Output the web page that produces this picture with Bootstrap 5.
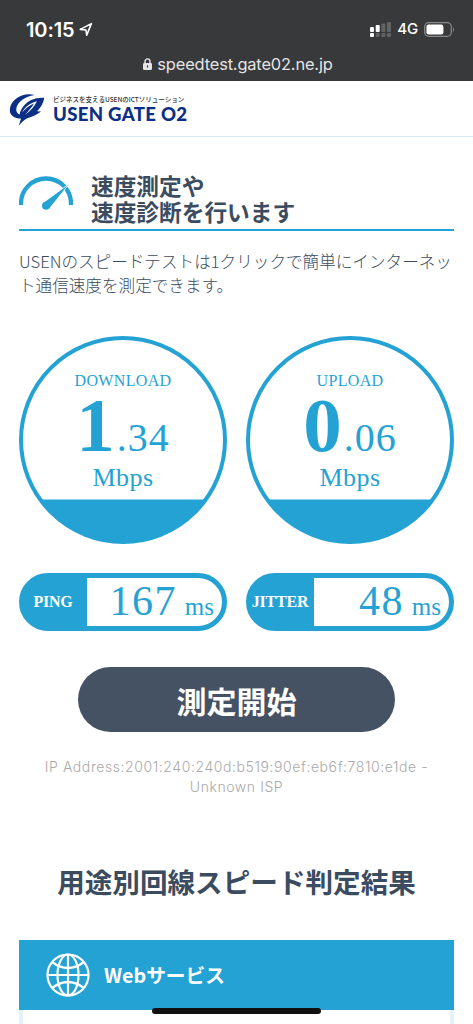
<!DOCTYPE html>
<html lang="ja">
<head>
<meta charset="utf-8">
<meta name="viewport" content="width=device-width, initial-scale=1">
<title>USEN GATE 02</title>
<link href="https://cdn.jsdelivr.net/npm/bootstrap@5.3.0/dist/css/bootstrap.min.css" rel="stylesheet">
<script src="https://cdn.jsdelivr.net/npm/bootstrap@5.3.0/dist/js/bootstrap.bundle.min.js" defer></script>
<style>
:root { --sky: #25a2d4; --navy: #3c4c60; }
body { font-family: "Noto Sans CJK JP", sans-serif; color: var(--navy); height: 1024px; overflow: hidden; background: #fff; }
svg { display: block; flex: none; }
.phone-bar { height: 81px; background: #38393b; color: #fff; font-family: Inter, sans-serif; }
.clock { height: 57px; padding: 2px 18px 0 26px; }
.clock-time { font-size: 20px; font-weight: 600; letter-spacing: -.1px; }
.net { font-size: 15px; font-weight: 500; letter-spacing: -.2px; margin: 0 6px; }
.url { height: 14px; font-size: 16.4px; letter-spacing: -.15px; color: #e4e4e5; line-height: 14px; padding-left: 2px; }
.brand-bar { height: 56px; border-bottom: 1px solid #d7e9f5; padding: 12px 9px; }
.brand-text { margin-left: 7px; padding-top: 2px; }
.brand-sub { font-size: 6.55px; line-height: 9px; font-weight: 500; letter-spacing: -.03px; color: #333; }
.brand-name { font-family: Lato, sans-serif; font-weight: 900; font-size: 18.6px; line-height: 20px; color: #0c2f86; letter-spacing: .3px; }
.page { padding: 36px 19px 0; }
.page-title { height: 58px; border-bottom: 2px solid var(--sky); }
.page-title h1 { font-size: 22.7px; line-height: 26px; font-weight: 700; margin: 0 0 0 18px; white-space: nowrap; }
.intro { font-size: 16.6px; line-height: 24px; font-weight: 300; margin: 18px 0 0; height: 87px; white-space: nowrap; }
.meters { gap: 19px; font-family: "Liberation Serif", serif; color: var(--sky); }
.dial { width: 208px; height: 208px; border: 4.5px solid var(--sky); border-radius: 50%; background: linear-gradient(#fff 159px, var(--sky) 160px); padding-top: 33px; white-space: nowrap; }
.dial-label { font-size: 16px; line-height: 16px; letter-spacing: .35px; }
.dial-value { height: 76px; line-height: 73px; }
.whole { font-size: 77px; font-weight: 700; letter-spacing: 2px; }
.frac { font-size: 40px; letter-spacing: 1px; }
.dial-unit { font-size: 26px; line-height: 26px; letter-spacing: .4px; }
.pill { width: 208px; height: 58px; border: 5px solid var(--sky); border-radius: 29px; background: linear-gradient(90deg, var(--sky) 63px, #fff 63px) border-box; background-origin: padding-box; margin-top: 10px; }
.pill-label { width: 63px; color: #fff; font-size: 16px; font-weight: 700; letter-spacing: -.2px; padding: 0 5px 1px 0; }
.pill-value { font-size: 42px; line-height: 46px; letter-spacing: 1.4px; padding-right: 8px; }
.pill-value span { font-size: 25px; letter-spacing: 0; margin-left: 8px; }
.start { width: 317px; height: 65px; border-radius: 33px; background: #455264; color: #fff; font-size: 30px; font-weight: 700; line-height: 1; margin-top: 36px; padding: 0; }
.start:hover { background: #364355; color: #fff; }
.address { font-family: Inter, sans-serif; font-size: 14px; line-height: 20px; font-weight: 300; color: #aaa; margin-top: 25px; height: 40px; letter-spacing: .58px; white-space: nowrap; }
.results { font-size: 27.6px; line-height: 34px; font-weight: 700; margin: 67px 0 42px; white-space: nowrap; }
.service-head { height: 70px; background: var(--sky); color: #fff; padding-left: 27px; font-size: 19.7px; font-weight: 700; gap: 14px; }
.service-body { height: 14px; border: 4px solid #e5f1f9; border-width: 0 4px; }
.home-line { position: absolute; left: 152px; top: 1008px; width: 169px; height: 6px; border-radius: 3px; background: #111; }
</style>
</head>
<body>
<header class="phone-bar">
  <div class="clock d-flex align-items-center">
    <span class="clock-time">10:15</span>
    <svg class="ms-1" width="14" height="15" viewBox="0 0 14 15" fill="none" stroke="#fff" stroke-width="1.6" stroke-linejoin="round"><path d="M1.2 7.4 12.4 1.6 7.7 13.2 7 8z"/></svg>
    <svg class="ms-auto" width="21" height="15" viewBox="0 0 21 15" fill="#fff"><rect y="5" width="4" height="5" rx="1"/><rect x="5.7" y="3" width="4" height="7" rx="1"/><rect y="11" width="4" height="4" rx="1"/><g fill="#626365"><rect x="11.4" y="1.5" width="4" height="8.5" rx="1"/><rect x="17" width="4" height="10" rx="1"/><rect x="5.7" y="11" width="4" height="4" rx="1"/><rect x="11.4" y="11" width="4" height="4" rx="1"/><rect x="17" y="11" width="4" height="4" rx="1"/></g></svg>
    <span class="net">4G</span>
    <svg width="31" height="15" viewBox="0 0 31 15"><rect x=".7" y=".7" width="26.6" height="13.6" rx="4" fill="none" stroke="#888" stroke-width="1.3"/><rect x="2.4" y="2.4" width="17" height="10.2" rx="2.3" fill="#fff"/><path d="M29 5q2 2.5 0 5z" fill="#888"/></svg>
  </div>
  <div class="url d-flex justify-content-center align-items-center">
    <svg class="me-1" width="11" height="13" viewBox="0 0 11 13"><rect x="1" y="5" width="9" height="7" rx="1.2" fill="#e4e4e5"/><path d="M3 5.5V3.4a2.5 2.5 0 0 1 5 0v2.1" fill="none" stroke="#e4e4e5" stroke-width="1.4"/><path d="M5.5 7.4v2" stroke="#38393b" stroke-width="1.3"/></svg>
    <span>speedtest.gate02.ne.jp</span>
  </div>
</header>
<nav class="brand-bar d-flex">
  <svg width="37" height="33" viewBox="0 0 37 33" fill="#0c2f86"><path d="M25.500 2C14-1.500 .8 7 .8 17c0 5.500 4.500 8.500 11.200 8.600l-2.200 7C13 29 15.500 26.500 19 25c5-1.500 9.500-3.500 13-6.500l-4-.3C32 14.500 34.500 10 35.300 4.800 27 4 20 7 15.500 12c-3 3.500-4.500 6.500-5 9.500C4 19 6.500 5.500 25.500 2z"/><path d="M13 19.500C16.500 13.500 21 10 28 8.300 25.500 13.500 21 18.500 16 21.800 20 17.500 23 14 25 10.500 20 12.500 16.500 15.500 13 19.500z" fill="#fff"/></svg>
  <div class="brand-text text-nowrap">
    <div class="brand-sub">ビジネスを支えるUSENのICTソリューション</div>
    <div class="brand-name">USEN GATE O2</div>
  </div>
</nav>
<main class="page">
  <div class="page-title d-flex">
    <svg width="54" height="40" viewBox="0 0 54 40"><path d="M2 32v-1.500a25 25 0 0 1 50 0V32" fill="none" stroke="#25a2d4" stroke-width="4.300"/><path d="M50.500 10.500 30.300 35.800 24 29.800z" fill="#25a2d4" stroke="#fff" stroke-width=".8"/><circle cx="27" cy="32.700" r="4" fill="#25a2d4"/></svg>
    <h1>速度測定や<br>速度診断を行います</h1>
  </div>
  <p class="intro">USENのスピードテストは1クリックで簡単にインターネッ<br>ト通信速度を測定できます。</p>
  <section class="meters d-flex flex-wrap">
    <div class="dial text-center">
      <div class="dial-label">DOWNLOAD</div>
      <div class="dial-value"><span class="whole">1</span><span class="frac">.34</span></div>
      <div class="dial-unit">Mbps</div>
    </div>
    <div class="dial text-center">
      <div class="dial-label">UPLOAD</div>
      <div class="dial-value"><span class="whole">0</span><span class="frac">.06</span></div>
      <div class="dial-unit">Mbps</div>
    </div>
    <div class="pill d-flex"><div class="pill-label d-flex align-items-center justify-content-center">PING</div><div class="pill-value flex-fill text-end">167<span>ms</span></div></div>
    <div class="pill d-flex"><div class="pill-label d-flex align-items-center justify-content-center">JITTER</div><div class="pill-value flex-fill text-end">48<span>ms</span></div></div>
  </section>
  <button class="start btn border-0 d-block mx-auto">測定開始</button>
  <div class="address text-center">IP Address:2001:240:240d:b519:90ef:eb6f:7810:e1de -<br>Unknown ISP</div>
  <h2 class="results text-center">用途別回線スピード判定結果</h2>
  <section>
    <div class="service-head d-flex align-items-center">
      <svg width="44" height="44" viewBox="0 0 44 44" fill="none" stroke="#fff" stroke-width="2.2"><circle cx="22" cy="22" r="20.500"/><ellipse cx="22" cy="22" rx="10.500" ry="20.500"/><path d="M22 1.500v41M1.500 22h41M6 9q16 12 32 0M6 35q16-12 32 0"/></svg>
      <span>Webサービス</span>
    </div>
    <div class="service-body"></div>
  </section>
</main>
<div class="home-line"></div>
</body>
</html>
